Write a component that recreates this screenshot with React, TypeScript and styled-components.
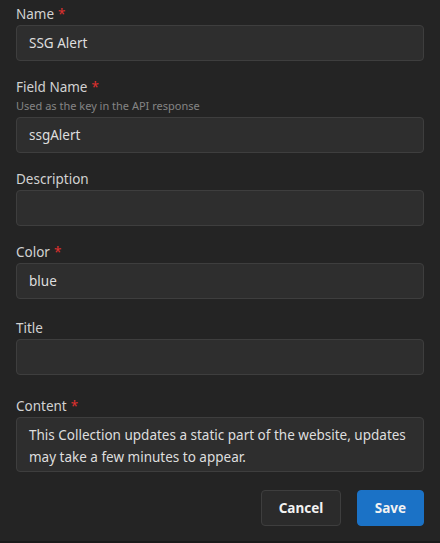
import React from 'react';
import { styled, createGlobalStyle } from 'styled-components';

const GlobalStyle = createGlobalStyle`
  html, body {
    margin: 0;
    padding: 0;
    background: #242424;
  }
  * {
    box-sizing: border-box;
  }
`;

type Field = {
  label: string;
  required?: boolean;
  help?: string;
  value?: string;
  multiline?: boolean;
  extra?: number;
};

const fields: Field[] = [
  { label: 'Name', required: true, value: 'SSG Alert' },
  { label: 'Field Name', required: true, help: 'Used as the key in the API response', value: 'ssgAlert' },
  { label: 'Description', value: '' },
  { label: 'Color', required: true, value: 'blue' },
  { label: 'Title', value: '', extra: 3 },
  {
    label: 'Content',
    required: true,
    extra: 5,
    multiline: true,
    value: 'This Collection updates a static part of the website, updates may take a few minutes to appear.',
  },
];

export default function App() {
  return (
    <Page>
      <GlobalStyle />
      <Form>
        {fields.map((f) => (
          <Group key={f.label} $extra={f.extra ?? 0}>
            <Label>
              {f.label}
              {f.required && <Star>*</Star>}
            </Label>
            {f.help && <Help>{f.help}</Help>}
            {f.multiline ? (
              <TextArea defaultValue={f.value} rows={2} />
            ) : (
              <Input defaultValue={f.value} />
            )}
          </Group>
        ))}
      </Form>
      <Actions>
        <Button $width={80}>Cancel</Button>
        <Button $width={67} $primary>Save</Button>
      </Actions>
    </Page>
  );
}

const Page = styled.div`
  width: 440px;
  height: 543px;
  padding: 4px 16px 0;
  background: #242424;
  border-bottom: 2px solid #1a1a1a;
  font-family: 'Noto Sans', 'Open Sans', sans-serif;
  font-size: 14px;
  color: #d6d6d6;
  display: flex;
  flex-direction: column;
`;

const Form = styled.div`
  display: flex;
  flex-direction: column;
  gap: 16px;
`;

const Group = styled.div<{ $extra: number }>`
  display: flex;
  flex-direction: column;
  margin-top: ${(p) => p.$extra}px;
`;

const Label = styled.label`
  font-size: 13.5px;
  line-height: 20px;
  color: #d2d2d2;
  margin-bottom: 1px;
`;

const Star = styled.span`
  color: #e0312f;
  margin-left: 4px;
`;

const Help = styled.div`
  font-size: 11px;
  line-height: 15px;
  color: #858585;
  margin-bottom: 4px;
`;

const Input = styled.input`
  height: 36px;
  width: 100%;
  padding: 0 12px;
  background: #2e2e2e;
  border: 1px solid #3e3e3e;
  border-radius: 4px;
  color: #dedede;
  font-family: inherit;
  font-size: 13.5px;
  outline: none;
`;

const TextArea = styled.textarea`
  height: 55px;
  width: 100%;
  padding: 6px 12px;
  background: #2e2e2e;
  border: 1px solid #3e3e3e;
  border-radius: 4px;
  color: #dedede;
  font-family: inherit;
  font-size: 13.5px;
  line-height: 22px;
  resize: none;
  overflow: hidden;
  outline: none;
`;

const Actions = styled.div`
  display: flex;
  justify-content: flex-end;
  gap: 16px;
  margin-top: 18px;
`;

const Button = styled.button<{ $primary?: boolean; $width: number }>`
  height: 36px;
  width: ${(p) => p.$width}px;
  padding: 0;
  border-radius: 4px;
  font-family: inherit;
  font-size: 13.5px;
  font-weight: 700;
  color: #f2f2f2;
  background: ${(p) => (p.$primary ? '#1b72c6' : '#2b2b2b')};
  border: 1px solid ${(p) => (p.$primary ? '#1b72c6' : '#3e3e3e')};
  cursor: pointer;
`;
